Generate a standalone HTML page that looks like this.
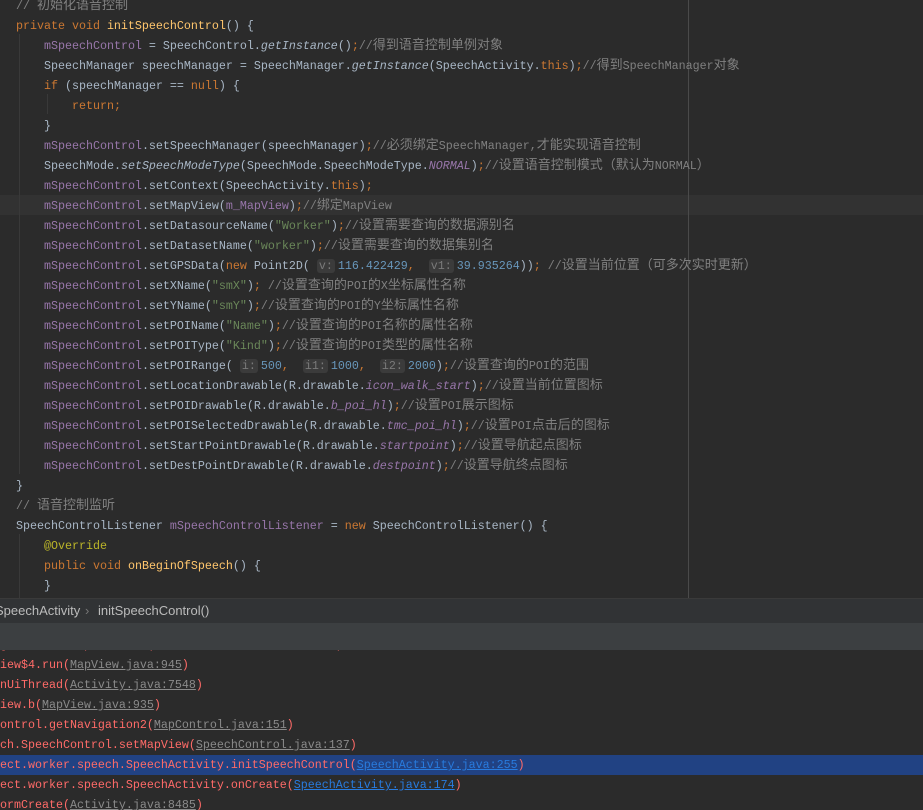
<!DOCTYPE html>
<html><head><meta charset="utf-8"><style>
body{margin:0;width:923px;height:810px;overflow:hidden;background:#2b2b2b;position:relative;font-family:"Liberation Mono","Noto Sans CJK SC",monospace;font-size:11.67px;}
.l{position:absolute;left:0;height:20px;line-height:20px;white-space:pre;color:#a9b7c6;margin-top:2px}
.k{color:#cc7832}.f{color:#9876aa}.c{color:#808080}.s{color:#6a8759}.n{color:#6897bb}.i{font-style:italic}.m{color:#ffc66d}.a{color:#bbb529}.fi{color:#9876aa;font-style:italic}
.z{font-family:"Noto Sans CJK SC",sans-serif;font-size:13px;line-height:0;}
.h{background:#3b3b3b;color:#7a7a7a;border-radius:3px;padding:0 2px;margin-right:3px;}
.r{color:#ff6b68;margin-top:0}.u{color:#8a8a8a;text-decoration:underline}.b{color:#287bde;text-decoration:underline}
.g{position:absolute;width:1px;background:#393939}
</style></head><body>
<div style="position:absolute;left:0;top:195px;width:923px;height:20px;background:#323232"></div>
<div class="g" style="left:688px;top:0;height:598px;background:#4a4a4a"></div>
<div class="g" style="left:19px;top:34px;height:440px"></div>
<div class="g" style="left:47px;top:94px;height:20px"></div>
<div class="g" style="left:19px;top:534px;height:64px"></div>

<div class="l" style="top:-6px;left:16px"><span class="c">// <span class="z">初始化语音控制</span></span></div>
<div class="l" style="top:14px;left:16px"><span class="k">private void </span><span class="m">initSpeechControl</span>() {</div>
<div class="l" style="top:34px;left:44px"><span class="f">mSpeechControl</span> = SpeechControl.<span class="i">getInstance</span>()<span class="k">;</span><span class="c">//<span class="z">得到语音控制单例对象</span></span></div>
<div class="l" style="top:54px;left:44px">SpeechManager speechManager = SpeechManager.<span class="i">getInstance</span>(SpeechActivity.<span class="k">this</span>)<span class="k">;</span><span class="c">//<span class="z">得到</span>SpeechManager<span class="z">对象</span></span></div>
<div class="l" style="top:74px;left:44px"><span class="k">if </span>(speechManager == <span class="k">null</span>) {</div>
<div class="l" style="top:94px;left:72px"><span class="k">return;</span></div>
<div class="l" style="top:114px;left:44px">}</div>
<div class="l" style="top:134px;left:44px"><span class="f">mSpeechControl</span>.setSpeechManager(speechManager)<span class="k">;</span><span class="c">//<span class="z">必须绑定</span>SpeechManager,<span class="z">才能实现语音控制</span></span></div>
<div class="l" style="top:154px;left:44px">SpeechMode.<span class="i">setSpeechModeType</span>(SpeechMode.SpeechModeType.<span class="fi">NORMAL</span>)<span class="k">;</span><span class="c">//<span class="z">设置语音控制模式（默认为</span>NORMAL<span class="z">）</span></span></div>
<div class="l" style="top:174px;left:44px"><span class="f">mSpeechControl</span>.setContext(SpeechActivity.<span class="k">this</span>)<span class="k">;</span></div>
<div class="l" style="top:194px;left:44px"><span class="f">mSpeechControl</span>.setMapView(<span class="f">m_MapView</span>)<span class="k">;</span><span class="c">//<span class="z">绑定</span>MapView</span></div>
<div class="l" style="top:214px;left:44px"><span class="f">mSpeechControl</span>.setDatasourceName(<span class="s">"Worker"</span>)<span class="k">;</span><span class="c">//<span class="z">设置需要查询的数据源别名</span></span></div>
<div class="l" style="top:234px;left:44px"><span class="f">mSpeechControl</span>.setDatasetName(<span class="s">"worker"</span>)<span class="k">;</span><span class="c">//<span class="z">设置需要查询的数据集别名</span></span></div>
<div class="l" style="top:254px;left:44px"><span class="f">mSpeechControl</span>.setGPSData(<span class="k">new </span>Point2D( <span class="h">v:</span><span class="n">116.422429</span><span class="k">, </span> <span class="h">v1:</span><span class="n">39.935264</span>))<span class="k">; </span><span class="c">//<span class="z">设置当前位置（可多次实时更新）</span></span></div>
<div class="l" style="top:274px;left:44px"><span class="f">mSpeechControl</span>.setXName(<span class="s">"smX"</span>)<span class="k">; </span><span class="c">//<span class="z">设置查询的</span>POI<span class="z">的</span>X<span class="z">坐标属性名称</span></span></div>
<div class="l" style="top:294px;left:44px"><span class="f">mSpeechControl</span>.setYName(<span class="s">"smY"</span>)<span class="k">;</span><span class="c">//<span class="z">设置查询的</span>POI<span class="z">的</span>Y<span class="z">坐标属性名称</span></span></div>
<div class="l" style="top:314px;left:44px"><span class="f">mSpeechControl</span>.setPOIName(<span class="s">"Name"</span>)<span class="k">;</span><span class="c">//<span class="z">设置查询的</span>POI<span class="z">名称的属性名称</span></span></div>
<div class="l" style="top:334px;left:44px"><span class="f">mSpeechControl</span>.setPOIType(<span class="s">"Kind"</span>)<span class="k">;</span><span class="c">//<span class="z">设置查询的</span>POI<span class="z">类型的属性名称</span></span></div>
<div class="l" style="top:354px;left:44px"><span class="f">mSpeechControl</span>.setPOIRange( <span class="h">i:</span><span class="n">500</span><span class="k">, </span> <span class="h">i1:</span><span class="n">1000</span><span class="k">, </span> <span class="h">i2:</span><span class="n">2000</span>)<span class="k">;</span><span class="c">//<span class="z">设置查询的</span>POI<span class="z">的范围</span></span></div>
<div class="l" style="top:374px;left:44px"><span class="f">mSpeechControl</span>.setLocationDrawable(R.drawable.<span class="fi">icon_walk_start</span>)<span class="k">;</span><span class="c">//<span class="z">设置当前位置图标</span></span></div>
<div class="l" style="top:394px;left:44px"><span class="f">mSpeechControl</span>.setPOIDrawable(R.drawable.<span class="fi">b_poi_hl</span>)<span class="k">;</span><span class="c">//<span class="z">设置</span>POI<span class="z">展示图标</span></span></div>
<div class="l" style="top:414px;left:44px"><span class="f">mSpeechControl</span>.setPOISelectedDrawable(R.drawable.<span class="fi">tmc_poi_hl</span>)<span class="k">;</span><span class="c">//<span class="z">设置</span>POI<span class="z">点击后的图标</span></span></div>
<div class="l" style="top:434px;left:44px"><span class="f">mSpeechControl</span>.setStartPointDrawable(R.drawable.<span class="fi">startpoint</span>)<span class="k">;</span><span class="c">//<span class="z">设置导航起点图标</span></span></div>
<div class="l" style="top:454px;left:44px"><span class="f">mSpeechControl</span>.setDestPointDrawable(R.drawable.<span class="fi">destpoint</span>)<span class="k">;</span><span class="c">//<span class="z">设置导航终点图标</span></span></div>
<div class="l" style="top:474px;left:16px">}</div>
<div class="l" style="top:494px;left:16px"><span class="c">// <span class="z">语音控制监听</span></span></div>
<div class="l" style="top:514px;left:16px">SpeechControlListener <span class="f">mSpeechControlListener </span>= <span class="k">new </span>SpeechControlListener() {</div>
<div class="l" style="top:534px;left:44px"><span class="a">@Override</span></div>
<div class="l" style="top:554px;left:44px"><span class="k">public void </span><span class="m">onBeginOfSpeech</span>() {</div>
<div class="l" style="top:574px;left:44px">}</div>

<div style="position:absolute;left:0;top:598px;width:923px;height:25px;background:#313335;border-top:1px solid #3a3a3a;font-family:'Liberation Sans','DejaVu Sans',sans-serif;font-size:13px;color:#bbbbbb;line-height:24px;white-space:pre"><span style="position:absolute;left:-5px">SpeechActivity</span><span style="position:absolute;left:85px;color:#777">›</span><span style="position:absolute;left:98px">initSpeechControl()</span></div>
<div style="position:absolute;left:0;top:623px;width:923px;height:27px;background:#3c3f41"></div>
<div style="position:absolute;left:0;top:650px;width:923px;height:160px;background:#2b2b2b;overflow:hidden">
<div style="position:absolute;left:0;top:105px;width:923px;height:20px;background:#214283"></div>
<div class="l r" style="top:-15px;left:0">g        .  p        (<span class="u">                          </span>)</div>
<div class="l r" style="top:5px;left:-7px">View$4.run(<span class="u">MapView.java:945</span>)</div>
<div class="l r" style="top:25px;left:-7px">onUiThread(<span class="u">Activity.java:7548</span>)</div>
<div class="l r" style="top:45px;left:-7px">View.b(<span class="u">MapView.java:935</span>)</div>
<div class="l r" style="top:65px;left:-7px">Control.getNavigation2(<span class="u">MapControl.java:151</span>)</div>
<div class="l r" style="top:85px;left:-7px">ech.SpeechControl.setMapView(<span class="u">SpeechControl.java:137</span>)</div>
<div class="l r" style="top:105px;left:-7px">ject.worker.speech.SpeechActivity.initSpeechControl(<span class="b">SpeechActivity.java:255</span>)</div>
<div class="l r" style="top:125px;left:-7px">ject.worker.speech.SpeechActivity.onCreate(<span class="b">SpeechActivity.java:174</span>)</div>
<div class="l r" style="top:145px;left:-7px">formCreate(<span class="u">Activity.java:8485</span>)</div>
</div>
</body></html>
